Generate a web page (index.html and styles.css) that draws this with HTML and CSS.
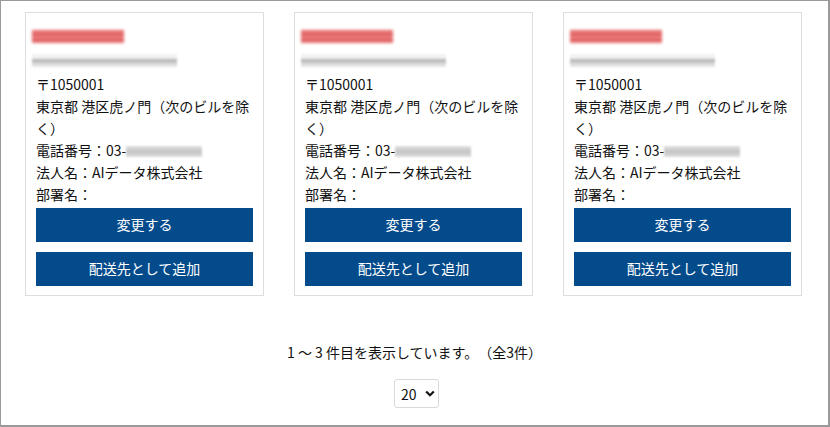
FILE: index.html
```html
<!DOCTYPE html>
<html lang="ja">
<head>
<meta charset="utf-8">
<link rel="stylesheet" href="styles.css">
</head>
<body>
<div class="frame">
  <div class="cards">
    <div class="card">
      <div class="name-row"><span class="blur-red"></span></div>
      <div class="kana-row"><span class="blur-gray"></span></div>
      <div class="info">
        <p>〒1050001</p>
        <p>東京都 港区虎ノ門（次のビルを除く）</p>
        <p>電話番号：03-<span class="blur-phone"></span></p>
        <p>法人名：AIデータ株式会社</p>
        <p>部署名：</p>
      </div>
      <button class="btn">変更する</button>
      <button class="btn btn-second">配送先として追加</button>
    </div>
    <div class="card">
      <div class="name-row"><span class="blur-red"></span></div>
      <div class="kana-row"><span class="blur-gray"></span></div>
      <div class="info">
        <p>〒1050001</p>
        <p>東京都 港区虎ノ門（次のビルを除く）</p>
        <p>電話番号：03-<span class="blur-phone"></span></p>
        <p>法人名：AIデータ株式会社</p>
        <p>部署名：</p>
      </div>
      <button class="btn">変更する</button>
      <button class="btn btn-second">配送先として追加</button>
    </div>
    <div class="card">
      <div class="name-row"><span class="blur-red"></span></div>
      <div class="kana-row"><span class="blur-gray"></span></div>
      <div class="info">
        <p>〒1050001</p>
        <p>東京都 港区虎ノ門（次のビルを除く）</p>
        <p>電話番号：03-<span class="blur-phone"></span></p>
        <p>法人名：AIデータ株式会社</p>
        <p>部署名：</p>
      </div>
      <button class="btn">変更する</button>
      <button class="btn btn-second">配送先として追加</button>
    </div>
  </div>
  <p class="count">1 ～ 3 件目を表示しています。（全3件）</p>
  <div class="per-page">
    <div class="select">
      <span>20</span>
      <svg width="10" height="7" viewBox="0 0 10 7"><path d="M1.2 1.5 L5 5.2 L8.8 1.5" fill="none" stroke="#111" stroke-width="2.2"/></svg>
    </div>
  </div>
</div>
</body>
</html>
```
FILE: styles.css
```css
* { box-sizing: border-box; }
html, body { margin: 0; padding: 0; background: #fff; }
body {
  font-family: "Noto Sans CJK JP", "Noto Sans", sans-serif;
  font-size: 14px;
  color: #111;
  text-spacing-trim: space-all;
}
.frame {
  width: 830px;
  height: 427px;
  border: 1px solid #9a9a9a;
  border-right-width: 2px;
  border-bottom-width: 2px;
  overflow: hidden;
}
.cards {
  display: grid;
  grid-template-columns: repeat(3, 239px);
  column-gap: 30px;
  padding: 11px 0 0 24px;
}
.card {
  border: 1px solid #dedede;
  padding: 10px 10px 9px 10px;
  display: flex;
  flex-direction: column;
}
.name-row {
  height: 26px;
  display: flex;
  align-items: center;
}
.blur-red {
  display: block;
  width: 92px;
  height: 13px;
  margin-left: -4px;
  background: repeating-linear-gradient(180deg, #e04a4a 0 2px, #f5b5b5 2px 3px, #d42a2a 3px 5px, #f0a0a0 5px 6px);
  filter: blur(1.8px);
  opacity: 0.9;
}
.kana-row {
  height: 23px;
  display: flex;
  align-items: center;
}
.blur-gray {
  display: block;
  width: 145px;
  height: 13px;
  margin-left: -4px;
  background: linear-gradient(180deg, #f2f2f2 0 30%, #b0b0b0 50%, #cfcfcf 65%, #ececec 100%);
  filter: blur(1px);
}
.info p {
  margin: 0;
  line-height: 22px;
  white-space: normal;
}
.info p:first-child { margin-top: 1px; }
.blur-phone {
  display: inline-block;
  width: 76px;
  height: 11px;
  vertical-align: -1px;
  background: linear-gradient(180deg, #e2e2e2, #c4c4c4 50%, #dedede);
  filter: blur(0.8px);
}
.btn {
  display: block;
  width: 100%;
  height: 34px;
  margin-top: 3px;
  border: none;
  background: #044b8c;
  color: #fff;
  font-family: inherit;
  font-size: 14px;
  line-height: 30px;
  padding: 0 0 3px 0;
}
.btn-second { margin-top: 10px; }
.count {
  margin: 45px 0 0 0;
  text-align: center;
  line-height: 22px;
}
.per-page {
  display: flex;
  justify-content: center;
  margin-top: 16px;
  padding-left: 4px;
}
.select {
  width: 45px;
  height: 29px;
  border: 1px solid #dadada;
  border-radius: 3px;
  display: flex;
  align-items: center;
  gap: 8px;
  padding-left: 6px;
  font-size: 14px;
  color: #111;
}
```
